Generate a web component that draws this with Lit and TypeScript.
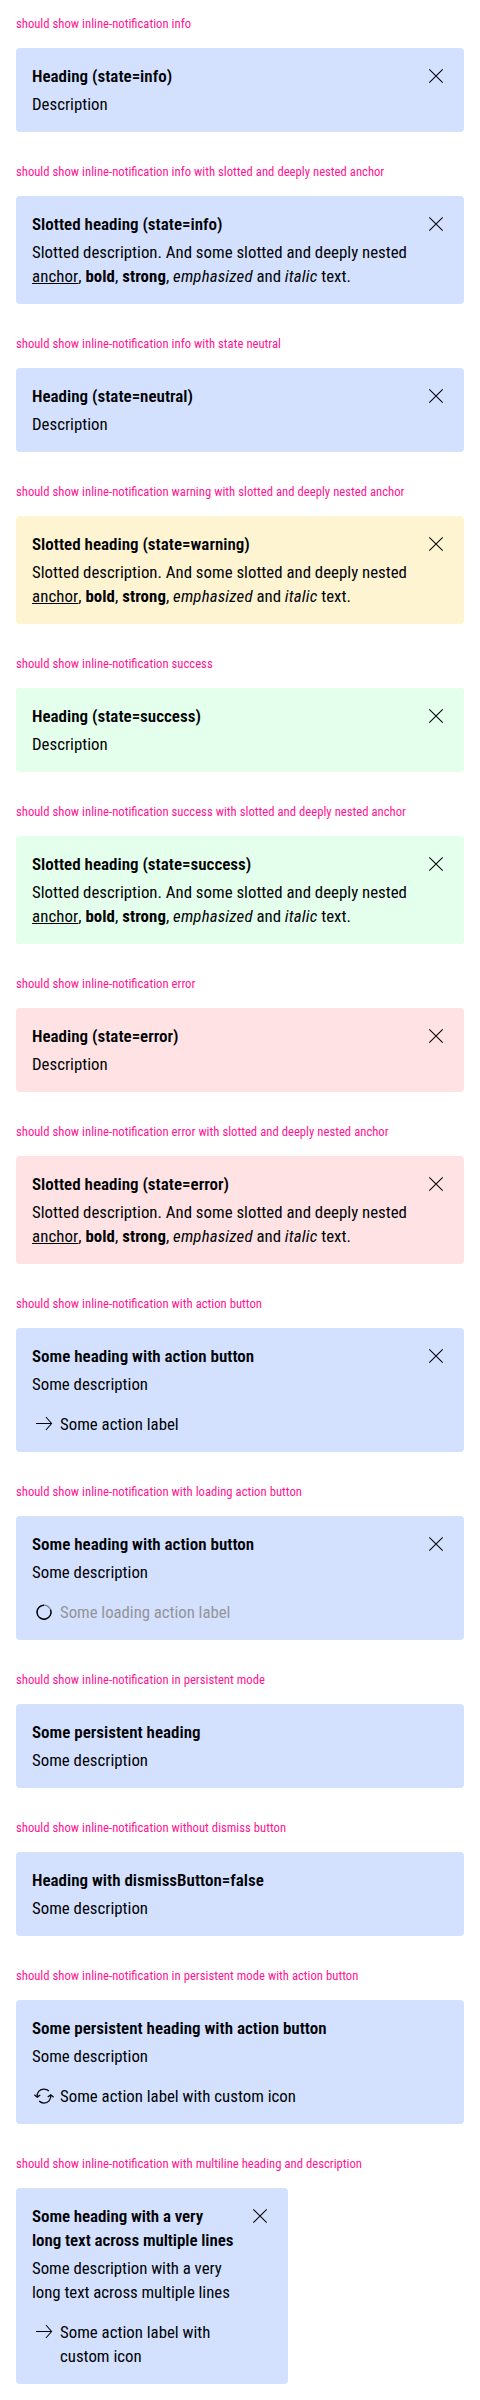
import { LitElement, html, css, svg, nothing } from "lit";
import type { TemplateResult } from "lit";
import { customElement, property } from "lit/decorators.js";

const icons: Record<string, TemplateResult> = {
  close: svg`<path d="M5.3 5.3 18.7 18.7M18.7 5.3 5.3 18.7" />`,
  arrow: svg`<path d="M4 11.5H19.4M13.9 5 19.6 11.5 13.9 18" />`,
  reset: svg`<path class="medium" d="M5.2 13C4.7 8.2 8 5 12 5C14 5 15.6 5.7 16.9 7M18.8 11C19.3 15.8 16 19 12 19C10 19 8.4 18.3 7.1 17" /><path class="medium" d="M2.4 10.7 5.2 13.1 8.3 10.9M15.7 13.1 18.8 10.9 21.6 13.3" />`,
  spinner: svg`<circle class="track" cx="12" cy="12.2" r="7" /><path class="arc" d="M12 5.2A7 7 0 1 0 18.6 9.8" />`,
};

interface Notice {
  label: string;
  heading: string;
  description?: string;
  tone?: string;
  dismiss?: boolean;
  action?: string;
  icon?: string;
  narrow?: boolean;
}

const notices: Notice[] = [
  { label: "info", heading: "Heading (state=info)", description: "Description", dismiss: true },
  { label: "info with slotted and deeply nested anchor", heading: "Slotted heading (state=info)", dismiss: true },
  { label: "info with state neutral", heading: "Heading (state=neutral)", description: "Description", dismiss: true },
  { label: "warning with slotted and deeply nested anchor", heading: "Slotted heading (state=warning)", tone: "warning", dismiss: true },
  { label: "success", heading: "Heading (state=success)", description: "Description", tone: "success", dismiss: true },
  { label: "success with slotted and deeply nested anchor", heading: "Slotted heading (state=success)", tone: "success", dismiss: true },
  { label: "error", heading: "Heading (state=error)", description: "Description", tone: "error", dismiss: true },
  { label: "error with slotted and deeply nested anchor", heading: "Slotted heading (state=error)", tone: "error", dismiss: true },
  { label: "with action button", heading: "Some heading with action button", description: "Some description", dismiss: true, action: "Some action label", icon: "arrow" },
  { label: "with loading action button", heading: "Some heading with action button", description: "Some description", dismiss: true, action: "Some loading action label", icon: "spinner" },
  { label: "in persistent mode", heading: "Some persistent heading", description: "Some description" },
  { label: "without dismiss button", heading: "Heading with dismissButton=false", description: "Some description" },
  { label: "in persistent mode with action button", heading: "Some persistent heading with action button", description: "Some description", action: "Some action label with custom icon", icon: "reset" },
  { label: "with multiline heading and description", heading: "Some heading with a very\nlong text across multiple lines", description: "Some description with a very\nlong text across multiple lines", dismiss: true, action: "Some action label with custom icon", icon: "arrow", narrow: true },
];

@customElement("inline-notification")
export class InlineNotification extends LitElement {
  static styles = css`
    :host { display: block; }
    .card {
      display: flex;
      align-items: flex-start;
      gap: 12px;
      padding: 16px;
      border-radius: 4px;
      background: #d3e1ff;
      color: #010205;
      font: 400 16.83px/24px "Roboto Condensed", Roboto, sans-serif;
    }
    .warning { background: #fff4d2; }
    .success { background: #e4ffec; }
    .error { background: #ffe2e4; }
    .narrow { width: 240px; }
    .body { flex: 1; min-width: 0; display: flex; flex-direction: column; }
    .heading { margin: 0 0 4px; font-size: 17px; line-height: 24px; font-weight: 600; white-space: pre-line; }
    .narrow .heading { letter-spacing: -0.09px; }
    .narrow .description { letter-spacing: -0.04px; }
    .description { margin: 0; white-space: pre-line; }
    .description a { color: inherit; text-decoration: underline; letter-spacing: 0.1px; }
    .description b { font-weight: 700; letter-spacing: 0.1px; }
    .description em, .description i { letter-spacing: 0.2px; }
    .nested { word-spacing: -0.1px; }
    .button { all: unset; display: flex; align-items: flex-start; gap: 4px; }
    .action { margin-top: 16px; }
    .loading { color: #949598; letter-spacing: -0.05px; }
    .icon { flex: none; display: block; width: 24px; height: 24px; fill: none; stroke: #010205; stroke-width: 1.05; }
    .medium { stroke-width: 1.25; }
    .track { stroke: #7d828c; stroke-width: 1.3; }
    .arc { stroke-width: 1.4; }
  `;
  @property({ attribute: false }) notice!: Notice;

  private icon(name: string) {
    return html`<svg class="icon" viewBox="0 0 24 24" aria-hidden="true">${icons[name]}</svg>`;
  }

  render() {
    const n = this.notice;
    return html`<div class="card ${n.tone ?? "info"} ${n.narrow ? "narrow" : ""}">
      <div class="body">
        <h5 class="heading">${n.heading}</h5>
        <p class="description">${n.description ??
          html`Slotted description. And some slotted and deeply nested <span class="nested"><a>anchor</a>, <b>bold</b>, <b>strong</b>, <em>emphasized</em> and <i>italic</i> text.</span>`}</p>
        ${n.action
          ? html`<button class="button action ${n.icon === "spinner" ? "loading" : ""}">${this.icon(n.icon!)}<span>${n.action}</span></button>`
          : nothing}
      </div>
      ${n.dismiss ? html`<button class="button" aria-label="Close">${this.icon("close")}</button>` : nothing}
    </div>`;
  }
}

@customElement("app-root")
export class AppRoot extends LitElement {
  static styles = css`
    :host { display: block; background: #fff; }
    .section { padding: 16px; }
    .label { margin: 0 0 16px; color: #ff1493; font: 400 12.67px/16px "Roboto Condensed", Roboto, sans-serif; word-spacing: 0.15px; }
  `;
  render() {
    return html`${notices.map((n) => html`<section class="section">
      <p class="label">should show inline-notification ${n.label}</p>
      <inline-notification .notice=${n}></inline-notification>
    </section>`)}`;
  }
}
